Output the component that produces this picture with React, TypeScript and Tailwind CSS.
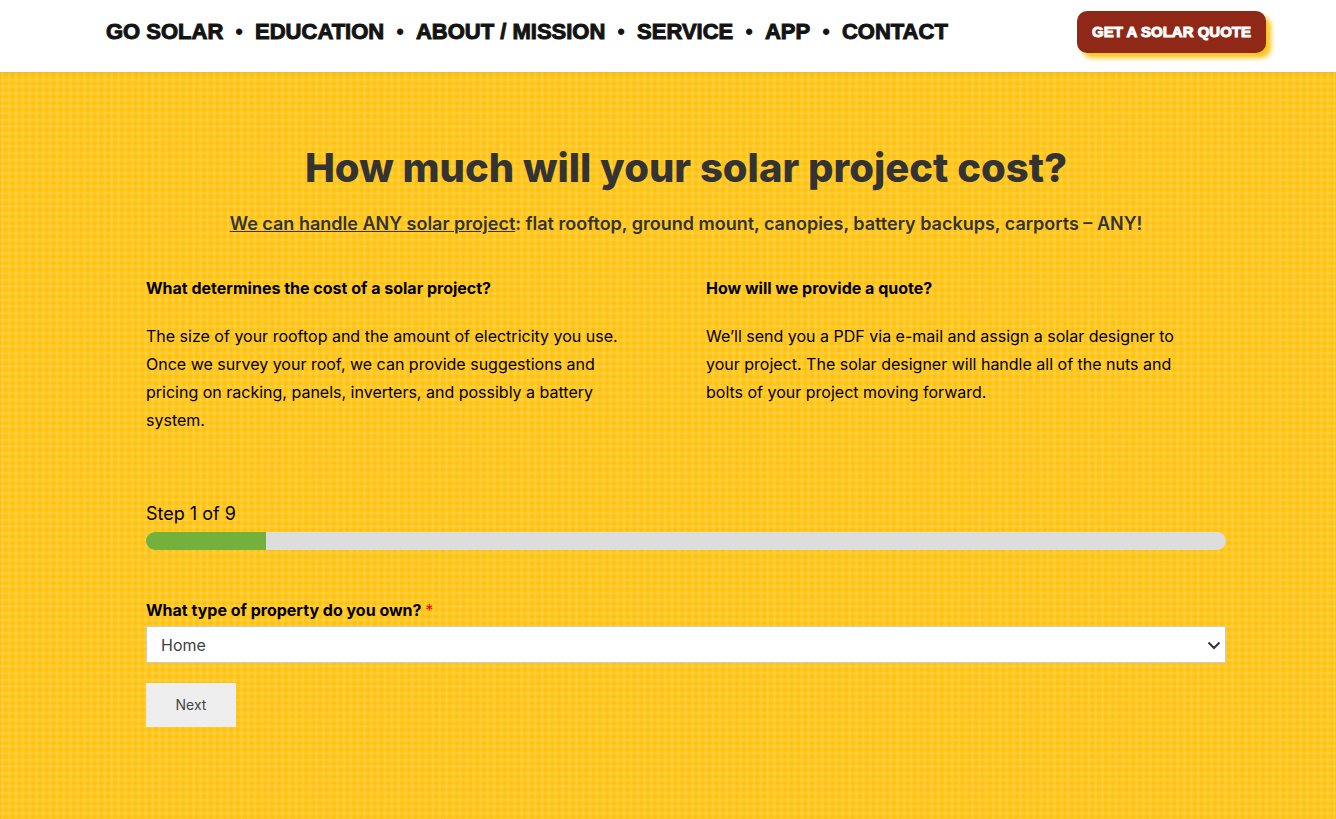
import React, { useState } from 'react';

const NAV_LINKS = ['GO SOLAR', 'EDUCATION', 'ABOUT / MISSION', 'SERVICE', 'APP', 'CONTACT'];
const PROPERTY_TYPES = ['Home', 'Business', 'Farm', 'Non-profit'];
const TOTAL_STEPS = 9;

const Header: React.FC = () => (
  <header className="flex items-start justify-between bg-white pt-[11px] pb-[19px] pr-[70px] pl-[106px]">
    <nav className="flex h-10 items-center gap-3 font-['Liberation_Sans',Arial,sans-serif] text-[22px] font-bold text-[#141414]">
      {NAV_LINKS.map((label, i) => (
        <React.Fragment key={label}>
          {i > 0 && <span>•</span>}
          <a href="#" className="[-webkit-text-stroke:1px_#141414]">
            {label}
          </a>
        </React.Fragment>
      ))}
    </nav>
    <a
      href="#quote"
      className="flex h-[42px] items-center rounded-[10px] bg-[#8f2817] px-[15px] font-['Liberation_Sans',Arial,sans-serif] text-[15px] font-bold text-white shadow-[5px_5px_5px_#f5c518] [-webkit-text-stroke:1px_white]"
    >
      GET A SOLAR QUOTE
    </a>
  </header>
);

const QuoteForm: React.FC = () => {
  const [step, setStep] = useState(1);
  const [property, setProperty] = useState('Home');

  return (
    <form id="quote" className="mt-[66px]" onSubmit={(e) => e.preventDefault()}>
      <p className="text-lg leading-7">
        Step {step} of {TOTAL_STEPS}
      </p>
      <div className="mt-1 h-[18px] overflow-hidden rounded-full bg-[#dddddd]">
        <div className="h-full bg-[#73b13c]" style={{ width: `${(step / TOTAL_STEPS) * 100}%` }} />
      </div>

      <label htmlFor="property" className="mt-12 block text-base leading-6 font-bold">
        What type of property do you own? <span className="font-normal text-red-600">*</span>
      </label>
      <div className="relative mt-1">
        <select
          id="property"
          value={property}
          onChange={(e) => setProperty(e.target.value)}
          className="block h-[37px] w-full appearance-none border border-[#cccccc] bg-white px-[14px] text-base leading-6 text-[#404040]"
        >
          {PROPERTY_TYPES.map((type) => (
            <option key={type}>{type}</option>
          ))}
        </select>
        <svg
          className="pointer-events-none absolute top-3 right-[5px] h-[14px] w-[14px]"
          viewBox="0 0 14 14"
          fill="none"
          stroke="#303338"
          strokeWidth="2"
          aria-hidden="true"
        >
          <path d="M1.5 4.5 7 10l5.5-5.5" />
        </svg>
      </div>
      <button
        type="button"
        onClick={() => setStep(Math.min(step + 1, TOTAL_STEPS))}
        className="mt-5 h-11 w-[90px] bg-[#eeeeee] text-sm text-[#444444]"
      >
        Next
      </button>
    </form>
  );
};

export default function App() {
  return (
    <div className="flex min-h-screen flex-col font-['Inter','Open_Sans',sans-serif] text-black">
      <Header />
      <main className="grow bg-[#ffc10d] bg-[repeating-linear-gradient(90deg,#ffe69000_0%,#ffe69000_2%,#ffe69048_8%,#ffe69000_14%,#ffe69000_16.67%),repeating-linear-gradient(#ffe69000_0%,#ffe69000_4%,#ffe69048_16%,#ffe69000_28%,#ffe69000_33.33%)] bg-[length:41px_41px,20px_20px] bg-[position:-1px_0,0_-2px] pr-[110px] pb-20 pl-[146px] shadow-[inset_0_2px_3px_#00000014]">
        <h1 className="pt-[72px] text-center text-[40px] leading-[48px] font-extrabold text-[#333333]">
          How much will your solar project cost?
        </h1>
        <p className="mt-4 text-center text-lg leading-8 font-semibold text-[#333333]">
          <span className="underline">We can handle ANY solar project</span>: flat rooftop, ground mount, canopies,
          battery backups, carports – ANY!
        </p>
        <div className="mt-[34px] grid grid-cols-2 gap-10 text-base leading-7">
          <section className="pr-5">
            <h2 className="font-bold">What determines the cost of a solar project?</h2>
            <p className="mt-5">
              The size of your rooftop and the amount of electricity you use. Once we survey your roof, we can provide
              suggestions and pricing on racking, panels, inverters, and possibly a battery system.
            </p>
          </section>
          <section className="pr-5">
            <h2 className="font-bold">How will we provide a quote?</h2>
            <p className="mt-5">
              We’ll send you a PDF via e-mail and assign a solar designer to your project. The solar designer will
              handle all of the nuts and bolts of your project moving forward.
            </p>
          </section>
        </div>
        <QuoteForm />
      </main>
    </div>
  );
}
